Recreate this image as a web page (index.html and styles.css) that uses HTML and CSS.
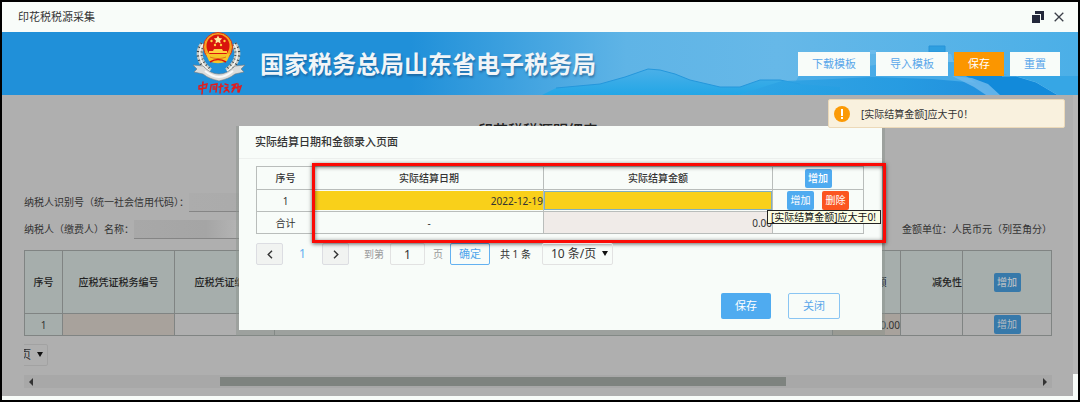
FILE: index.html
```html
<!DOCTYPE html>
<html lang="zh-CN">
<head>
<meta charset="utf-8">
<title>印花税税源采集</title>
<link rel="stylesheet" href="styles.css">
</head>
<body>
<div class="window">
  <div class="titlebar">
    <span class="titlebar-name">印花税税源采集</span>
    <button class="icon-btn" type="button" aria-label="还原">
      <svg width="12" height="12" viewBox="0 0 12 12"><path d="M3 0h9v9H9V3H3z" fill="#23273a"/><path d="M0 4h8v8H0z" fill="#23273a"/></svg>
    </button>
    <button class="icon-btn" type="button" aria-label="关闭窗口">
      <svg width="10" height="10" viewBox="0 0 10 10"><path d="M.7.7l8.600 8.600M9.300.7L.7 9.300" stroke="#3b3f48" stroke-width="1.300" fill="none"/></svg>
    </button>
  </div>

  <header class="banner">
    <svg class="banner-art" width="540" height="63" viewBox="0 0 540 63" aria-hidden="true">
      <defs>
        <linearGradient id="hill" x1="0" y1="0" x2="0" y2="1"><stop offset="0" stop-color="#4bb0e8"/><stop offset="1" stop-color="#22a6e6"/></linearGradient>
        <linearGradient id="sea" x1="0" y1="0" x2="1" y2="0"><stop offset="0" stop-color="#2fa4e4"/><stop offset=".6" stop-color="#1f98e0"/><stop offset="1" stop-color="#1787da"/></linearGradient>
      </defs>
      <path d="M262 42c40-8 70-4 100-16l28-4h16l20 10 40 10 36 10 38 11H250z" fill="#43a9e6" opacity=".8"/>
      <path d="M4 63l14-7 44-4 25-7 23-8 12 1 15 4 15 6 30 7h20l20-7h20l20 4 40 3v8z" fill="url(#hill)"/>
      <path d="M18 56l44-4 25-7 23-8 12 1 15 4 15 6 30 7h20l20-7h20l20 4" fill="none" stroke="#2497dc"/>
      <path d="M200 63l44-14 30-1 60-3 60 2 46 4 24 12z" fill="url(#sea)" opacity=".8"/>
      <path d="M391 14h16v6h-16z" fill="#2e9fe0" stroke="#2793d8"/>
      <path d="M332 18h6v4h-6zM408 22h5l3 8h-6z" fill="#6cbcec"/>
      <path d="M428 44h80l20 19h-72z" fill="#128ada"/>
      <path d="M414 44l20 2 16 6 12 11h-14l-12-8z" fill="#6db9ec" opacity=".85"/>
      <path d="M464 44h14l20 6 22 13" fill="none" stroke="#5fb6ea"/>
      <path d="M478 44h62v19h-20l-22-13z" fill="#36a6e5"/>
    </svg>
    <svg class="emblem" width="52" height="63" viewBox="0 0 52 63" role="img" aria-label="中国税务">
      <g fill="none" stroke="#c9cbc6" stroke-width="6">
        <path d="M10 12C4 20 6 31 17 39"/><path d="M41 12c6 8 4 19-7 27"/>
      </g>
      <g fill="none" stroke="#3d464a" stroke-width="6" stroke-dasharray="1 3">
        <path d="M10 12C4 20 6 31 17 39"/><path d="M41 12c6 8 4 19-7 27"/>
      </g>
      <g fill="none" stroke="#f4f4f0" stroke-width="1.500">
        <path d="M10 12C4 20 6 31 17 39"/><path d="M41 12c6 8 4 19-7 27"/>
      </g>
      <path d="M0 33l10 1c5 5 10 8 16 8s11-3 16-8l10-1-4 4 3 3-9 2c-5 4-9 5-16 7-7-2-11-3-16-7l-9-2 3-3z" fill="#dcdddc" stroke="#73797c" stroke-width=".6"/>
      <path d="M12 39c5 4 9 6 14 6s9-2 14-6" fill="none" stroke="#fafafa" stroke-width="2"/>
      <circle cx="25" cy="15" r="14.500" fill="#f5a320" stroke="#d83418"/>
      <circle cx="25" cy="14" r="11.500" fill="#d9140d"/>
      <path d="M25 3.500l1.300 2.600 2.900.4-2.100 2 .5 2.900-2.600-1.400-2.600 1.400.5-2.900-2.100-2 2.900-.4z" fill="#ffeaa0"/>
      <g fill="#ffcf40"><circle cx="18.500" cy="9" r="1.200"/><circle cx="31.500" cy="9" r="1.200"/><circle cx="22" cy="13" r="1.200"/><circle cx="28" cy="13" r="1.200"/>
      <path d="M21 17h8l1 2h4v2H16v-2h4z"/></g>
      <path d="M13 22h24l-3 7c-6 3-12 3-18 0z" fill="#f6c527"/>
      <path d="M17 25c5 2 11 2 16 0" fill="none" stroke="#e2731a" stroke-width="1"/>
      <path d="M17 30c5-3 11-3 16 0" fill="none" stroke="#d9140d" stroke-width="1.500"/>
      <g fill="none" stroke="#e21c1c" stroke-width="1.500" stroke-linecap="round">
        <path d="M6 54l8-2-1 4-7 1zM10 50l-1 12"/>
        <path d="M18 54l-1 6M18 53l6-1-1 8M20 55l2 0M20 57h2"/>
        <path d="M28 52l-1 9M26 55l4-1M32 52l3 1M32 56l3-1M31 60l3-3 2 3"/>
        <path d="M39 53l4-1-3 4 3-1M39 60l3-5M45 52v8M43 56l5-2-2 6"/>
      </g>
    </svg>
    <h1 class="banner-title">国家税务总局山东省电子税务局</h1>
    <div class="banner-actions">
      <button class="top-btn" type="button">下载模板</button>
      <button class="top-btn" type="button">导入模板</button>
      <button class="top-btn top-btn-main" type="button">保存</button>
      <button class="top-btn" type="button">重置</button>
    </div>
  </header>

  <div class="viewport">
    <main class="page">
      <h2 class="page-title">印花税税源明细表</h2>
      <div class="info-row"><span>纳税人识别号（统一社会信用代码）：</span><span class="info-value"></span></div>
      <div class="info-row"><span>纳税人（缴费人）名称：</span><span class="info-value info-value-name"></span><span class="unit">金额单位：人民币元（列至角分）</span></div>

      <table class="source-table">
        <colgroup><col class="c-no"><col class="c-tax"><col class="c-code"><col><col class="c-amount"><col class="c-relief"><col class="c-op"></colgroup>
        <thead>
          <tr><th>序号</th><th>应税凭证税务编号</th><th>应税凭证编号</th><th></th><th>应纳税额</th><th class="right">减免性</th><th><button class="add-btn dim" type="button">增加</button></th></tr>
        </thead>
        <tbody>
          <tr><td class="tint">1</td><td class="locked"></td><td></td><td></td><td class="locked right">0.00</td><td></td><td><button class="add-btn dim" type="button">增加</button></td></tr>
        </tbody>
      </table>

      <div class="clip">
        <span class="select-box select-cut"><select class="select" aria-label="每页条数"><option>10 条/页</option></select></span>
      </div>
      <div class="hscroll">
        <svg width="5" height="8" viewBox="0 0 5 8"><path d="M5 0v8L1 4z" fill="#333"/></svg>
        <div class="hscroll-track"><div class="hscroll-thumb"></div></div>
        <svg width="5" height="8" viewBox="0 0 5 8"><path d="M0 0v8l4-4z" fill="#333"/></svg>
      </div>
    </main>
    <div class="vscroll"></div>
  </div>

  <section class="modal" role="dialog" aria-labelledby="modal-title">
    <h2 class="modal-title" id="modal-title">实际结算日期和金额录入页面</h2>
    <div class="modal-body">
      <div class="entry">
        <table class="entry-table">
          <colgroup><col class="e-no"><col><col><col class="e-op"></colgroup>
          <thead>
            <tr><th>序号</th><th>实际结算日期</th><th>实际结算金额</th><th><button class="add-btn" type="button">增加</button></th></tr>
          </thead>
          <tbody>
            <tr><td>1</td><td><input class="cell-input" type="text" value="2022-12-19" aria-label="实际结算日期"></td><td><input class="cell-input cell-active" type="text" aria-label="实际结算金额"></td><td><div class="ops"><button class="add-btn" type="button">增加</button><button class="add-btn del-btn" type="button">删除</button></div></td></tr>
            <tr><td>合计</td><td>-</td><td class="sum">0.00</td><td></td></tr>
          </tbody>
        </table>
        <div class="mark"></div>
        <div class="tooltip" role="tooltip">[实际结算金额]应大于0!</div>
      </div>
      <div class="pager">
        <button class="page-btn" type="button" aria-label="上一页"><svg width="6" height="9" viewBox="0 0 6 9"><path d="M5 .8L1.200 4.500 5 8.200" fill="none" stroke="#333" stroke-width="1.400"/></svg></button>
        <a class="page-now" href="#">1</a>
        <button class="page-btn" type="button" aria-label="下一页"><svg width="6" height="9" viewBox="0 0 6 9"><path d="M1 .8l3.800 3.700L1 8.200" fill="none" stroke="#333" stroke-width="1.400"/></svg></button>
        <label class="muted jump-label" for="jump">到第</label>
        <input class="jump" id="jump" type="text" value="1">
        <span class="muted">页</span>
        <button class="jump-btn" type="button">确定</button>
        <span class="total">共 1 条</span>
        <span class="select-box"><select class="select" aria-label="每页显示条数"><option>10 条/页</option></select></span>
      </div>
      <div class="modal-actions">
        <button class="act act-save" type="button">保存</button>
        <button class="act act-close" type="button">关闭</button>
      </div>
    </div>
  </section>

  <div class="toast" role="alert">
    <svg width="16" height="16" viewBox="0 0 16 16"><circle cx="8" cy="8" r="8" fill="#fb9a06"/><path d="M7 3h2v7H7zM7 11h2v2H7z" fill="#fff"/></svg>
    <span>[实际结算金额]应大于0！</span>
  </div>
</div>
</body>
</html>
```
FILE: styles.css
```css
* { box-sizing: border-box; }

body {
  margin: 0;
  min-height: 100vh;
  display: flex;
  border: 2px solid #000;
  border-bottom-width: 3px;
  background: #f8fcf9;
  color: #333;
  font: 10px/16px "Noto Sans", "Noto Sans CJK SC", sans-serif;
}

button, input, select { font: inherit; color: inherit; margin: 0; }
button { padding: 0; cursor: pointer; }
h1, h2 { margin: 0; }

.window {
  position: relative;
  flex: 1;
  min-width: 0;
  display: flex;
  flex-direction: column;
}

/* title bar */
.titlebar {
  display: flex;
  align-items: center;
  gap: 10px;
  height: 30px;
  padding: 0 14px 0 16px;
  background: #f8fcf9;
}
.titlebar-name { flex: 1; font-size: 11px; }
.icon-btn { display: flex; border: 0; background: none; }

/* banner */
.banner {
  position: relative;
  display: flex;
  align-items: center;
  height: 63px;
  padding: 0 18px 0 191px;
  background: linear-gradient(90deg, #2090d9 0, #2090d9 38%, #5fb4e6 58%, #66b8e8 72%, #4bafe7 100%);
}
.banner-art { position: absolute; right: 0; bottom: 0; }
.emblem { position: relative; flex: none; }
.banner-title {
  position: relative;
  flex: 1;
  margin-left: 15px;
  padding-bottom: 2px;
  color: #f1f5f8;
  font: bold 24px/32px "Noto Sans CJK SC", sans-serif;
  text-shadow: 1px 2px 2px rgba(20, 70, 120, .5);
  white-space: nowrap;
}
.banner-actions { position: relative; display: flex; gap: 6px; }
.top-btn {
  height: 24px;
  padding: 0 14px;
  border: 0;
  background: #f8fcf9;
  color: #5aa7ea;
  font-size: 11px;
}
.top-btn-main { background: #fb9600; color: #fff; }

/* page behind the dialog */
.viewport {
  flex: 1;
  display: flex;
  margin-bottom: 4px;
}
.page {
  flex: 1;
  min-width: 0;
  padding: 24px 21px 8px 22px;
  background: #afafaf;
}
.vscroll { width: 5px; margin-bottom: 22px; background: #b5b5b5; }
.page-title {
  margin-bottom: 52px;
  color: #222;
  font-size: 15px;
  font-weight: 500;
  line-height: 22px;
  text-align: center;
}
.info-row {
  display: flex;
  align-items: flex-start;
  height: 19px;
  margin-bottom: 8px;
  line-height: 19px;
}
.info-value {
  width: 240px;
  height: 19px;
  border-bottom: 1px solid #858585;
  background: linear-gradient(90deg, #acacac, #a6a6a6);
}
.info-value-name {
  background: linear-gradient(90deg, #a8a8a8, #a5a5a5 30%, #b6b6b6 45%);
}
.unit { margin-left: auto; }

.source-table, .entry-table {
  width: 100%;
  border-collapse: collapse;
  table-layout: fixed;
  text-align: center;
}
.source-table { margin-top: 11px; }
.source-table th, .source-table td {
  padding: 0;
  border: 1px solid #808483;
  white-space: nowrap;
  overflow: hidden;
}
.source-table th { height: 63px; background: #a6aeac; color: #222; font-weight: 500; }
.source-table td { height: 22px; }
.source-table .tint { background: #a6aeac; }
.source-table .locked { background: #a8a29c; }
.source-table .right { text-align: right; }
.c-no { width: 38px; }
.c-tax { width: 112px; }
.c-code { width: 100px; }
.c-amount { width: 68px; }
.c-relief { width: 62px; }
.c-op { width: 89px; }

.add-btn {
  display: inline-block;
  width: 27px;
  height: 19px;
  border: 0;
  border-radius: 2px;
  background: #4fabf0;
  color: #fff;
  line-height: 19px;
  vertical-align: middle;
}
.add-btn.dim { background: #3779aa; color: #b4bcc2; }
.del-btn { background: #fb5520; }

.clip { margin-top: 8px; height: 22px; overflow: hidden; }
.select-box { position: relative; display: inline-flex; }
.select-box::after {
  content: "";
  position: absolute;
  right: 5px;
  top: 8px;
  border: 3px solid transparent;
  border-top: 5px solid #111;
  border-bottom: 0;
  pointer-events: none;
}
.select {
  appearance: none;
  width: 71px;
  height: 22px;
  padding: 0 12px 0 8px;
  border: 1px solid #e2e2e2;
  border-radius: 2px;
  background: transparent;
  font-size: 12px;
}
.select-cut { margin-left: -47px; }
.select-cut .select { border-color: #a2a2a2; }

.hscroll {
  display: flex;
  align-items: center;
  gap: 12px;
  height: 13px;
  margin-top: 9px;
  padding: 0 4px;
  background: #a8a8a8;
}
.hscroll-track { flex: 1; }
.hscroll-thumb { width: 57.5%; height: 9px; margin-left: 17.7%; background: #7e837f; }

/* dialog */
.modal {
  position: absolute;
  top: 124px;
  left: 237px;
  right: 196px;
  background: #f8fcf9;
  box-shadow: 0 3px 0 3px rgba(135, 145, 137, .45);
}
.modal-title {
  padding: 8px 16px;
  border-bottom: 1px solid #edf0ee;
  font-size: 11px;
  font-weight: 500;
}
.modal-body { padding: 7px 18px 11px 17px; }
.entry { position: relative; }
.entry-table th, .entry-table td {
  height: 22px;
  padding: 0;
  border: 1px solid #b9bdbb;
}
.entry-table th { height: 23px; font-weight: 500; }
.e-no { width: 58px; }
.e-op { width: 91px; }
.cell-input {
  display: block;
  width: 100%;
  height: 19px;
  padding: 0;
  border: 0;
  border-radius: 0;
  background: #f9d01a;
  text-align: right;
}
.cell-active { border: 1px solid #80aec0; }
.ops { display: flex; justify-content: center; gap: 8px; }
.entry-table .sum { background: #f0ebe8; text-align: right; }
.mark {
  position: absolute;
  top: -3px;
  right: -22px;
  bottom: -9px;
  left: 56px;
  border: 3px solid #fb0a05;
  box-shadow: 0 1px 4px rgba(0, 0, 0, .6), inset 0 1px 4px rgba(0, 0, 0, .6);
  pointer-events: none;
}
.tooltip {
  position: absolute;
  top: 44px;
  right: -17px;
  padding: 0 4px 0 3px;
  border: 1px solid #222;
  background: #fbfde4;
  color: #111;
  line-height: 12px;
  white-space: nowrap;
}

.pager {
  display: flex;
  align-items: center;
  margin-top: 9px;
}
.page-btn {
  display: flex;
  align-items: center;
  justify-content: center;
  width: 27px;
  height: 22px;
  border: 1px solid #dcdde2;
  border-radius: 2px;
  background: #f1f3f1;
}
.page-now {
  width: 39px;
  color: #63aff0;
  font-size: 12px;
  text-align: center;
  text-decoration: none;
}
.muted { color: #999; }
.jump-label { margin-left: 15px; }
.jump {
  width: 35px;
  height: 22px;
  margin: 0 8px 0 6px;
  padding: 0;
  border: 1px solid #e2e2e2;
  border-radius: 2px;
  background: transparent;
  font-size: 12px;
  text-align: center;
}
.jump-btn {
  width: 40px;
  height: 22px;
  margin: 0 10px 0 7px;
  border: 1px solid #63b1f1;
  border-radius: 2px;
  background: transparent;
  color: #4fa5ec;
  font-size: 11px;
}
.total { margin-right: 11px; }

.modal-actions {
  display: flex;
  justify-content: flex-end;
  gap: 17px;
  margin-top: 28px;
  padding-right: 24px;
}
.act {
  height: 26px;
  padding: 0 14px;
  border: 0;
  border-radius: 2px;
  background: #4fabf0;
  color: #fff;
  font-size: 11px;
}
.act-close { border: 1px solid #8ac5f3; background: transparent; color: #5aa7ea; }

/* alert */
.toast {
  position: absolute;
  top: 97px;
  right: 13px;
  display: flex;
  align-items: center;
  gap: 11px;
  width: 237px;
  height: 29px;
  padding: 0 5px;
  border: 1px solid #ecd9b8;
  border-radius: 2px;
  background: #f9f1de;
}
```
